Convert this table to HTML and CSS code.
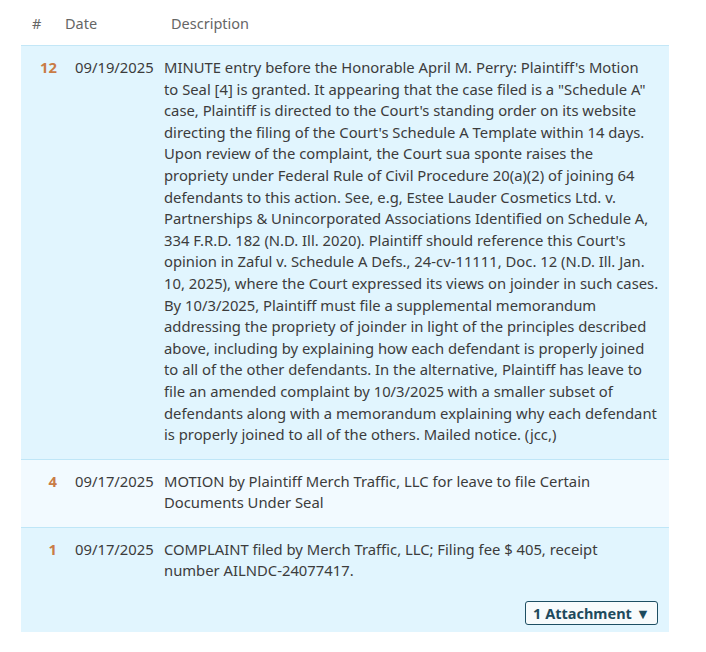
FILE: index.html
```html
<!DOCTYPE html>
<html>
<head>
<meta charset="utf-8">
<link rel="stylesheet" href="styles.css">
</head>
<body>
<div class="docket">
  <div class="head">
    <div class="h-num">#</div>
    <div class="h-date">Date</div>
    <div class="h-desc">Description</div>
  </div>
  <div class="row">
    <div class="num">12</div>
    <div class="date">09/19/2025</div>
    <div class="desc">MINUTE entry before the Honorable April M. Perry: Plaintiff's Motion<br>to Seal [4] is granted. It appearing that the case filed is a "Schedule A" case, Plaintiff is directed to the Court's standing order on its website directing the filing of the Court's Schedule A Template within 14 days. Upon review of the complaint, the Court sua sponte raises the propriety under Federal Rule of Civil Procedure 20(a)(2) of joining 64 defendants to this action. See, e.g, Estee Lauder Cosmetics Ltd. v. Partnerships &amp; Unincorporated Associations Identified on Schedule A, 334 F.R.D. 182 (N.D. Ill. 2020). Plaintiff should reference this Court's opinion in Zaful v. Schedule A Defs., 24-cv-11111, Doc. 12 (N.D. Ill. Jan. 10, 2025), where the Court expressed its views on joinder in such cases. By 10/3/2025, Plaintiff must file a supplemental memorandum addressing the propriety of joinder in light of the principles described above, including by explaining how each defendant is properly joined to all of the other defendants. In the alternative, Plaintiff has leave to file an amended complaint by 10/3/2025 with a smaller subset of defendants along with a memorandum explaining why each defendant is properly joined to all of the others. Mailed notice. (jcc,)</div>
  </div>
  <div class="row alt">
    <div class="num">4</div>
    <div class="date">09/17/2025</div>
    <div class="desc">MOTION by Plaintiff Merch Traffic, LLC for leave to file Certain Documents Under Seal</div>
  </div>
  <div class="row last">
    <div class="num">1</div>
    <div class="date">09/17/2025</div>
    <div class="desc">COMPLAINT filed by Merch Traffic, LLC; Filing fee $ 405, receipt<br>number AILNDC-24077417.
      <div class="attach"><button class="btn">1 Attachment ▼</button></div>
    </div>
  </div>
</div>
</body>
</html>
```
FILE: styles.css
```css
body {
  margin: 0;
  background: #fff;
  font-family: "Noto Sans", "Open Sans", sans-serif;
  color: #3c3c3c;
}
.docket {
  margin-left: 21px;
  width: 648px;
}
.head {
  display: flex;
  height: 46px;
  align-items: center;
  font-size: 14.5px;
  color: #666;
  border-bottom: 1px solid #c3e7f7;
  box-sizing: border-box;
}
.h-num { width: 44px; padding-left: 11px; box-sizing: border-box; }
.h-date { width: 106px; }
.h-desc { flex: 1; }
.row {
  display: grid;
  grid-template-columns: 36px 107px 1fr;
  background: #e1f5fe;
  border-bottom: 1px solid #bfe6f7;
  padding: 11px 0 13px;
  font-size: 14.8px;
  line-height: 21.6px;
}
.row.alt { background: #f2faff; padding-bottom: 13px; }
.row.last { border-bottom: none; padding-bottom: 7px; }
.num {
  text-align: right;
  font-weight: 700;
  color: #c97c46;
}
.date { padding-left: 18px; }
.desc { padding-right: 8px; }
.attach {
  display: flex;
  justify-content: flex-end;
  margin-top: 19px;
  padding-right: 3px;
}
.btn {
  font-family: "Noto Sans", "Open Sans", sans-serif;
  font-size: 14.5px;
  font-weight: 700;
  color: #1e4a5c;
  background: #f7fbfc;
  border: 1px solid #1e4f63;
  border-radius: 3px;
  padding: 0 7px;
  height: 24px;
  line-height: 20px;
}
```
